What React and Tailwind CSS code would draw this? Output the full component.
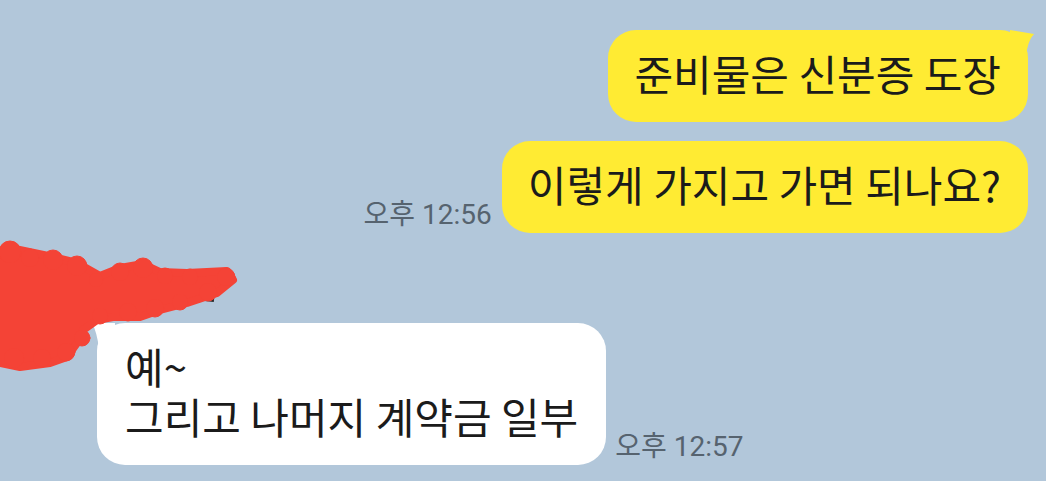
export default function App() {
  const kr = { fontFamily: '"Noto Sans CJK KR", "Noto Sans", sans-serif' };
  const tm = { fontFamily: 'Roboto, "Noto Sans CJK KR", sans-serif' };
  return (
    <div className="relative w-[1046px] h-[481px] bg-[#b2c7da] overflow-hidden">
      <div className="flex flex-col pt-[30px] pr-[18px]">
        <div className="flex justify-end">
          <div className="relative bg-[#ffeb33] rounded-[28px] h-[92px] pl-[26px] pr-[27px] pb-[6px] flex items-center text-[42px] leading-[50px] text-[#1b1b1b]" style={kr}>
            준비물은 신분증 도장
            <svg className="absolute -right-[6px] top-0" width="24" height="26" viewBox="0 0 24 26">
              <path d="M0 0 L24 4 Q18 10 16 26 L0 26 Z" fill="#ffeb33" />
            </svg>
          </div>
        </div>
        <div className="flex justify-end items-end gap-[10px] mt-[19px]">
          <div className="text-[28px] leading-none text-[#56636f] mb-[4px]" style={tm}>오후 12:56</div>
          <div className="bg-[#ffeb33] rounded-[28px] h-[92px] pl-[26px] pr-[27px] pb-[6px] flex items-center text-[42px] leading-[50px] text-[#1b1b1b]" style={kr}>
            이렇게 가지고 가면 되나요?
          </div>
        </div>
        <div className="flex items-end gap-[9px] mt-[90px] pl-[97px]">
          <div className="relative bg-white rounded-[28px] h-[142px] px-[28px] pb-[6px] flex flex-col justify-center text-[42px] leading-[50px] text-[#1b1b1b]" style={kr}>
            <div>예~</div>
            <div>그리고 나머지 계약금 일부</div>
            <svg className="absolute -left-[6px] top-0" width="24" height="26" viewBox="0 0 24 26">
              <path d="M24 0 L0 -2 Q6 8 8 26 L24 26 Z" fill="#ffffff" />
            </svg>
          </div>
          <div className="text-[28px] leading-none text-[#56636f] mb-[4px]" style={tm}>오후 12:57</div>
        </div>
      </div>
      <svg className="absolute left-0 top-0" width="260" height="380" viewBox="0 0 260 380">
        <path d="M196 298 L214 300" stroke="#2a2a2a" strokeWidth="4" />
        <path d="M60 350 Q70 340 78 330" stroke="#3a3a30" strokeWidth="8" fill="none" />
        <g fill="#f44336" stroke="#f44336" strokeLinejoin="round" strokeLinecap="round">
          <path d="M0 252 L10 248 L53 257 L77 263 L100 276 L120 268 L143 264 L160 272 L187 273 L227 271 L233 280 L217 293 L187 303 L160 310 L140 317 L113 317 L97 320 L83 330 L77 343 L67 357 L50 363 L20 367 L0 363 Z" strokeWidth="8" />
          <circle cx="10" cy="252" r="11" />
          <circle cx="30" cy="258" r="9" />
          <circle cx="53" cy="260" r="10" />
          <circle cx="77" cy="266" r="10" />
          <circle cx="96" cy="280" r="7" />
          <circle cx="120" cy="272" r="9" />
          <circle cx="143" cy="268" r="10" />
          <circle cx="165" cy="276" r="8" />
          <circle cx="190" cy="277" r="8" />
          <circle cx="226" cy="277" r="9" />
          <circle cx="208" cy="292" r="9" />
          <circle cx="180" cy="302" r="8" />
          <circle cx="155" cy="308" r="9" />
          <circle cx="128" cy="312" r="9" />
          <circle cx="100" cy="316" r="8" />
          <circle cx="82" cy="338" r="8" />
          <circle cx="66" cy="352" r="9" />
          <circle cx="42" cy="358" r="9" />
          <circle cx="14" cy="358" r="10" />
        </g>
      </svg>
    </div>
  );
}
